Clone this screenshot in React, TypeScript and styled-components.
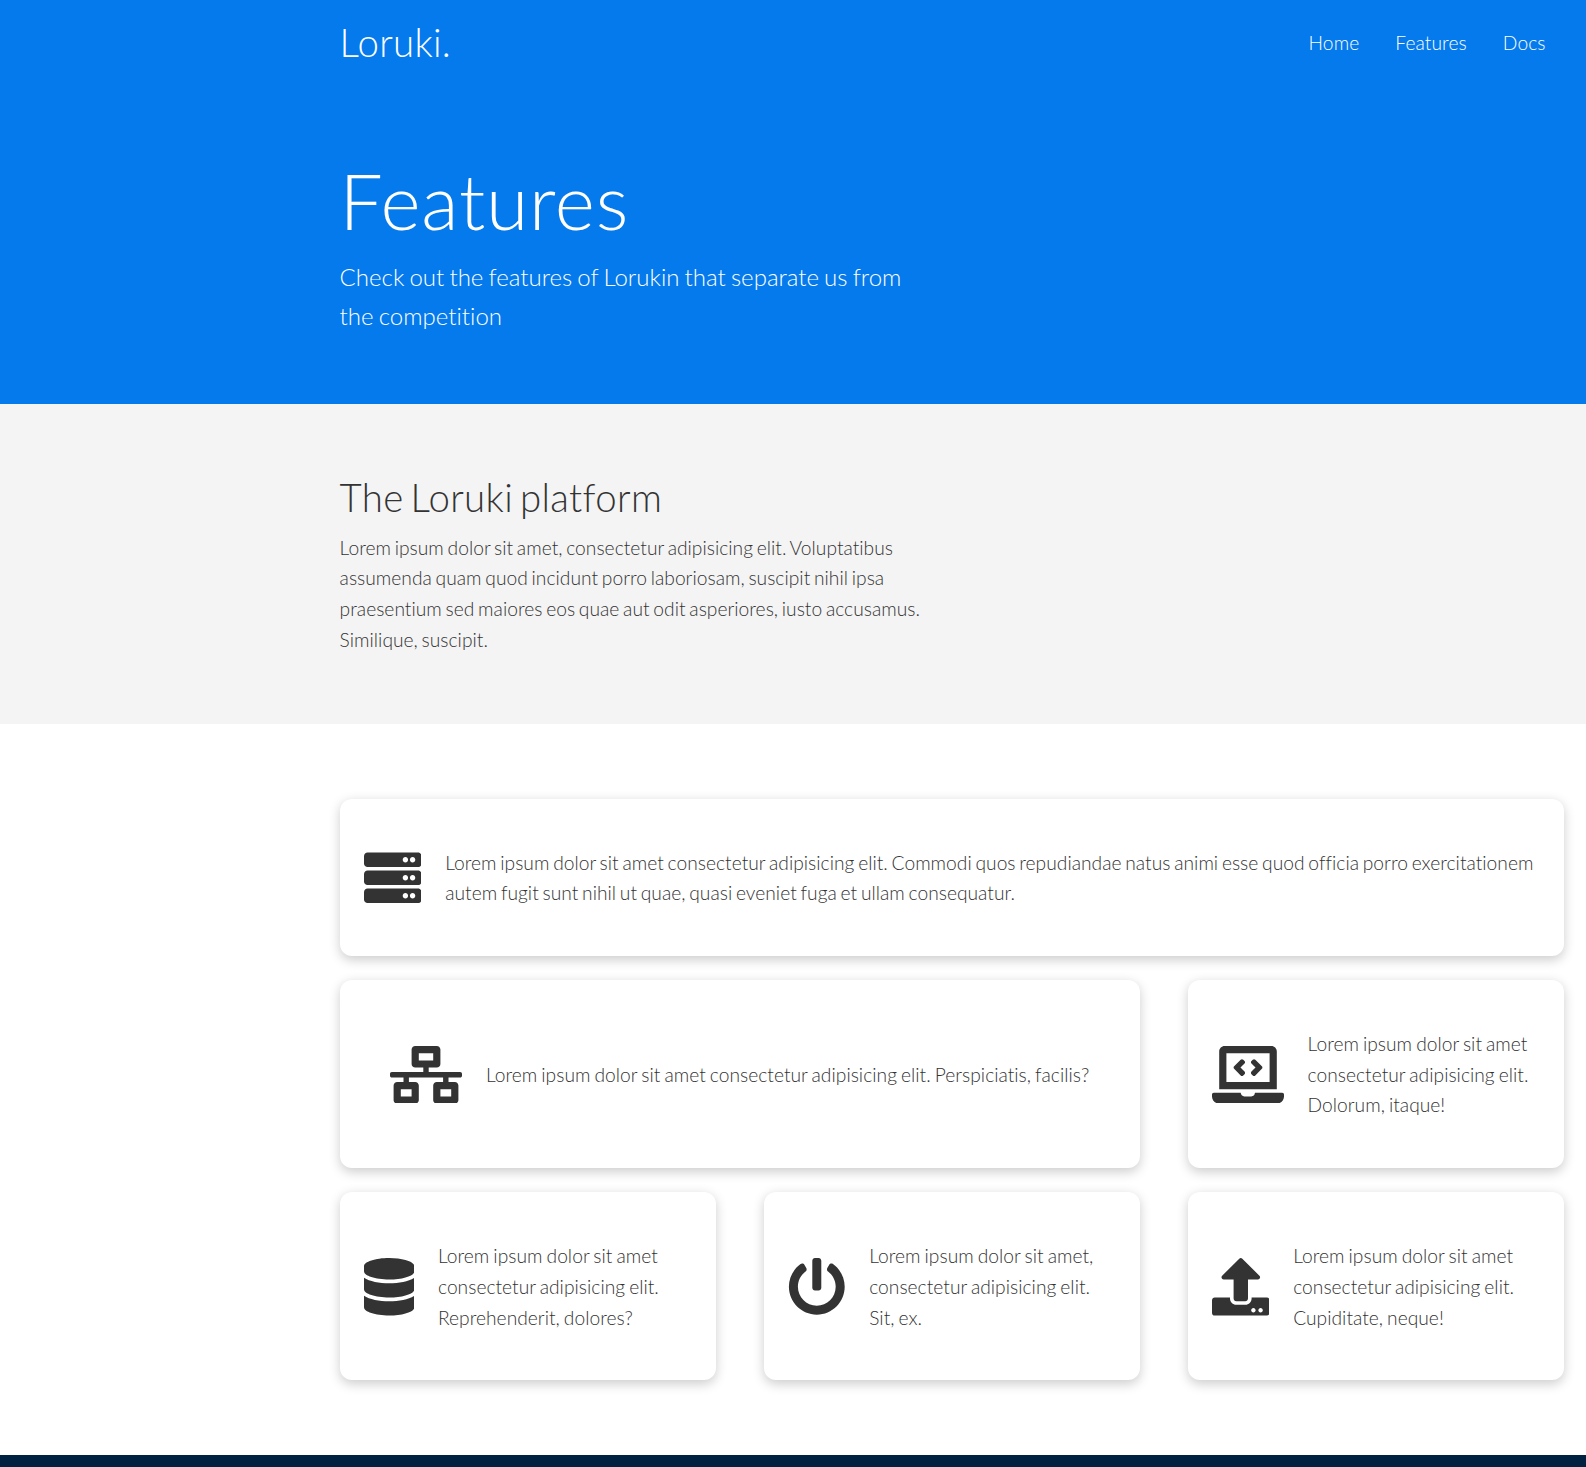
import React from 'react';
import styled, { createGlobalStyle } from 'styled-components';
import {
  FaServer,
  FaNetworkWired,
  FaLaptopCode,
  FaDatabase,
  FaPowerOff,
  FaUpload,
} from 'react-icons/fa';

const GlobalStyle = createGlobalStyle`
  * { box-sizing: border-box; margin: 0; padding: 0; }
  body {
    font-family: Lato, sans-serif;
    font-weight: 300;
    font-size: 19.2px;
    line-height: 1.6;
    letter-spacing: 0.03px;
    word-spacing: -1.5px;
    color: #333;
    background: #fff;
    overflow: hidden;
  }
`;

const Page = styled.div`
  height: 1467px;
  overflow: hidden;
`;

const Container = styled.div`
  margin-left: 339.6px;
  width: 1224px;
`;

const Navbar = styled.header`
  height: 84px;
  background: #047aed;
  color: #fff;
`;

const NavRow = styled(Container)`
  display: flex;
  align-items: center;
  justify-content: space-between;
  height: 100%;
`;

const Logo = styled.h1`
  font-size: 38.4px;
  font-weight: 300;
  line-height: 1.2;
  letter-spacing: 0.3px;
  margin: 12px 0;
`;

const NavList = styled.ul`
  display: flex;
  list-style: none;
  letter-spacing: 0.1px;
  padding-top: 2px;
`;

const NavLink = styled.a`
  color: #fff;
  text-decoration: none;
  padding: 12px;
  margin: 0 6px;
`;

const Hero = styled.section`
  height: 320px;
  padding-top: 70px;
  background: #047aed;
  color: #fff;
`;

const HeroTitle = styled.h1`
  font-size: 76.8px;
  font-weight: 300;
  line-height: 1.2;
  letter-spacing: 0.8px;
  margin-bottom: 12px;
`;

const Lead = styled.p`
  width: 600px;
  font-size: 24px;
  letter-spacing: 0.01px;
  word-spacing: -1.4px;
  font-variant-ligatures: no-common-ligatures;
`;

const Platform = styled.section`
  height: 320px;
  padding-top: 70px;
  background: #f4f4f4;
`;

const SectionTitle = styled.h2`
  font-size: 38.4px;
  font-weight: 300;
  line-height: 1.2;
  letter-spacing: 0.36px;
  word-spacing: -4px;
  margin-bottom: 12.5px;
`;

const PlatformText = styled.p`
  width: 600px;
`;

const Main = styled.section`
  padding: 74.55px 0 74.7px;
`;

const CardGrid = styled(Container)`
  display: grid;
  grid-template-columns: repeat(3, 1fr);
  gap: 24px 48px;
`;

const Card = styled.article<{ $span?: number }>`
  grid-column: span ${(p) => p.$span ?? 1};
  display: flex;
  align-items: center;
  justify-content: center;
  padding: 24px;
  border-radius: 12px;
  background: #fff;
  box-shadow: 0 3.6px 12px rgba(0, 0, 0, 0.2);
  word-spacing: ${(p) => (p.$span === 3 ? '-1.5px' : '-1.2px')};
`;

const IconBox = styled.span<{ $width: number }>`
  flex: none;
  display: flex;
  width: ${(p) => p.$width}px;
  height: 57.6px;
  margin: 1px 24px 0 0;

  svg {
    width: 100%;
    height: 100%;
  }
`;

const CardText = styled.p`
  margin: 25px 0 23px;
`;

const Footer = styled.footer`
  height: 120px;
  background: #002240;
`;

const links = ['Home', 'Features', 'Docs'];

const features = [
  {
    id: 'servers',
    Icon: FaServer,
    width: 57.6,
    span: 3,
    text: 'Lorem ipsum dolor sit amet consectetur adipisicing elit. Commodi quos repudiandae natus animi esse quod officia porro exercitationem autem fugit sunt nihil ut quae, quasi eveniet fuga et ullam consequatur.',
  },
  {
    id: 'network',
    Icon: FaNetworkWired,
    width: 72,
    span: 2,
    text: 'Lorem ipsum dolor sit amet consectetur adipisicing elit. Perspiciatis, facilis?',
  },
  {
    id: 'code',
    Icon: FaLaptopCode,
    width: 72,
    text: 'Lorem ipsum dolor sit amet consectetur adipisicing elit. Dolorum, itaque!',
  },
  {
    id: 'database',
    Icon: FaDatabase,
    width: 50.4,
    text: 'Lorem ipsum dolor sit amet consectetur adipisicing elit. Reprehenderit, dolores?',
  },
  {
    id: 'power',
    Icon: FaPowerOff,
    width: 57.6,
    text: 'Lorem ipsum dolor sit amet, consectetur adipisicing elit. Sit, ex.',
  },
  {
    id: 'upload',
    Icon: FaUpload,
    width: 57.6,
    text: 'Lorem ipsum dolor sit amet consectetur adipisicing elit. Cupiditate, neque!',
  },
];

export default function App() {
  return (
    <Page>
      <GlobalStyle />
      <Navbar>
        <NavRow>
          <Logo>Loruki.</Logo>
          <nav>
            <NavList>
              {links.map((label) => (
                <li key={label}>
                  <NavLink href="#">{label}</NavLink>
                </li>
              ))}
            </NavList>
          </nav>
        </NavRow>
      </Navbar>
      <Hero>
        <Container>
          <HeroTitle>Features</HeroTitle>
          <Lead>Check out the features of Lorukin that separate us from the competition</Lead>
        </Container>
      </Hero>
      <Platform>
        <Container>
          <SectionTitle>The Loruki platform</SectionTitle>
          <PlatformText>
            Lorem ipsum dolor sit amet, consectetur adipisicing elit. Voluptatibus assumenda quam
            quod incidunt porro laboriosam, suscipit nihil ipsa praesentium sed maiores eos quae aut
            odit asperiores, iusto accusamus. Similique, suscipit.
          </PlatformText>
        </Container>
      </Platform>
      <Main>
        <CardGrid>
          {features.map(({ id, Icon, width, span, text }) => (
            <Card key={id} $span={span}>
              <IconBox $width={width}>
                <Icon />
              </IconBox>
              <CardText>{text}</CardText>
            </Card>
          ))}
        </CardGrid>
      </Main>
      <Footer />
    </Page>
  );
}
